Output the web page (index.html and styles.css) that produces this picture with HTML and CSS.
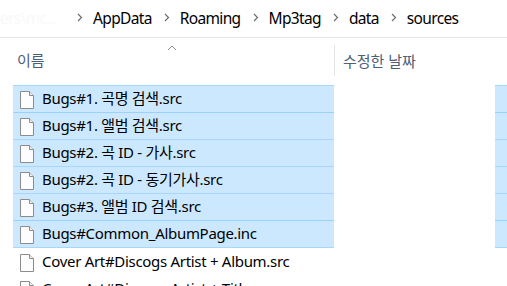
FILE: index.html
```html
<!DOCTYPE html>
<html lang="ko">
<head>
    <meta charset="UTF-8">
    <title>sources</title>
    <link rel="stylesheet" href="styles.css">
</head>
<body>
    <div class="crumbs">
        <span class="crumb faded">ers\mc...</span>
        <span class="chev"><svg width="6" height="9" viewBox="0 0 6 9"><path d="M1 1l3.5 3.5L1 8" fill="none" stroke="#6d6d6d" stroke-width="1.2"/></svg></span>
        <span class="crumb">AppData</span>
        <span class="chev"><svg width="6" height="9" viewBox="0 0 6 9"><path d="M1 1l3.5 3.5L1 8" fill="none" stroke="#6d6d6d" stroke-width="1.2"/></svg></span>
        <span class="crumb">Roaming</span>
        <span class="chev"><svg width="6" height="9" viewBox="0 0 6 9"><path d="M1 1l3.5 3.5L1 8" fill="none" stroke="#6d6d6d" stroke-width="1.2"/></svg></span>
        <span class="crumb">Mp3tag</span>
        <span class="chev"><svg width="6" height="9" viewBox="0 0 6 9"><path d="M1 1l3.5 3.5L1 8" fill="none" stroke="#6d6d6d" stroke-width="1.2"/></svg></span>
        <span class="crumb">data</span>
        <span class="chev"><svg width="6" height="9" viewBox="0 0 6 9"><path d="M1 1l3.5 3.5L1 8" fill="none" stroke="#6d6d6d" stroke-width="1.2"/></svg></span>
        <span class="crumb">sources</span>
    </div>

    <div class="header">
        <div class="col-name">
            <span>이름</span>
            <svg class="sort" width="10" height="6" viewBox="0 0 10 6"><path d="M1 5l4-4 4 4" fill="none" stroke="#8a8a8a" stroke-width="1"/></svg>
        </div>
        <div class="col-date">수정한 날짜</div>
    </div>

    <div class="list" id="list"></div>

    <script src="app.js"></script>
</body>
</html>
```

FILE: styles.css
```css
* {
    margin: 0;
    padding: 0;
    box-sizing: border-box;
}

body {
    background: #fff;
    font-family: "Noto Sans", "Noto Sans CJK KR", sans-serif;
    overflow: hidden;
    width: 507px;
    height: 286px;
}

.crumbs {
    height: 38px;
    border-bottom: 1px solid #e5e5e5;
    display: flex;
    align-items: center;
    font-size: 15.5px;
    letter-spacing: -0.65px;
    color: #000;
    white-space: nowrap;
}

.crumb.faded {
    color: #f9f9f9;
    width: 77px;
    margin-right: 0;
    overflow: hidden;
}

.chev {
    display: flex;
    align-items: center;
    padding-right: 10px;
    margin-top: -3px;
}

.crumb {
    margin-right: 12px;
    margin-top: -1px;
}

.header {
    height: 47px;
    display: grid;
    grid-template-columns: 334px 1fr;
    align-items: stretch;
    font-size: 15px;
    color: #4c607a;
}

.col-name {
    position: relative;
    padding-left: 17px;
    padding-bottom: 4px;
    display: flex;
    align-items: center;
}

.sort {
    position: absolute;
    left: 167px;
    top: 7px;
}

.col-date {
    border-left: 1px solid #e5e5e5;
    margin: 7px 0 9px;
    padding-left: 8px;
    padding-bottom: 1px;
    display: flex;
    align-items: center;
}

.list {
    padding-left: 13px;
}

.row {
    display: grid;
    grid-template-columns: 321px 161px 1fr;
    height: 27px;
    font-size: 15px;
    color: #000;
}

.cell {
    border-top: 1px solid transparent;
}

.name {
    display: flex;
    align-items: center;
    padding-left: 7px;
    gap: 8px;
    white-space: nowrap;
}

.name span {
    letter-spacing: -0.3px;
    margin-bottom: 3px;
}

.row.sel .name,
.row.sel .extra {
    background: #cce8ff;
    border-top-color: #a7d7ff;
}

.row.sel.dark .name,
.row.sel.dark .extra {
    border-top-color: #99d1ff;
}

.row.sel.last {
    height: 28px;
}

.row.sel.last .name,
.row.sel.last .extra {
    border-bottom: 1px solid #a7d7ff;
}

.icon {
    flex: none;
    margin-top: 1px;
}
```

FILE: app.js
```js
const files = [
    { name: 'Bugs#1. 곡명 검색.src', sel: true },
    { name: 'Bugs#1. 앨범 검색.src', sel: true, dark: true },
    { name: 'Bugs#2. 곡 ID - 가사.src', sel: true },
    { name: 'Bugs#2. 곡 ID - 동기가사.src', sel: true },
    { name: 'Bugs#3. 앨범 ID 검색.src', sel: true },
    { name: 'Bugs#Common_AlbumPage.inc', sel: true, dark: true, last: true },
    { name: 'Cover Art#Discogs Artist + Album.src' },
    { name: 'Cover Art#Discogs Artist + Title.src' }
];

const icon = '<svg class="icon" width="14" height="18" viewBox="0 0 14 18">' +
    '<path d="M0.5 0.5h9l4 4v13h-13z" fill="#fdfdfd" stroke="#8c8c8c"/>' +
    '<path d="M9.5 0.5v4h4" fill="#f0f0f0" stroke="#8c8c8c"/>' +
    '</svg>';

const list = document.getElementById('list');

files.forEach(f => {
    const row = document.createElement('div');
    row.className = 'row' + (f.sel ? ' sel' : '') + (f.dark ? ' dark' : '') + (f.last ? ' last' : '');
    row.innerHTML =
        '<div class="cell name">' + icon + '<span>' + f.name + '</span></div>' +
        '<div class="cell date"></div>' +
        '<div class="cell extra"></div>';
    list.appendChild(row);
});
```
